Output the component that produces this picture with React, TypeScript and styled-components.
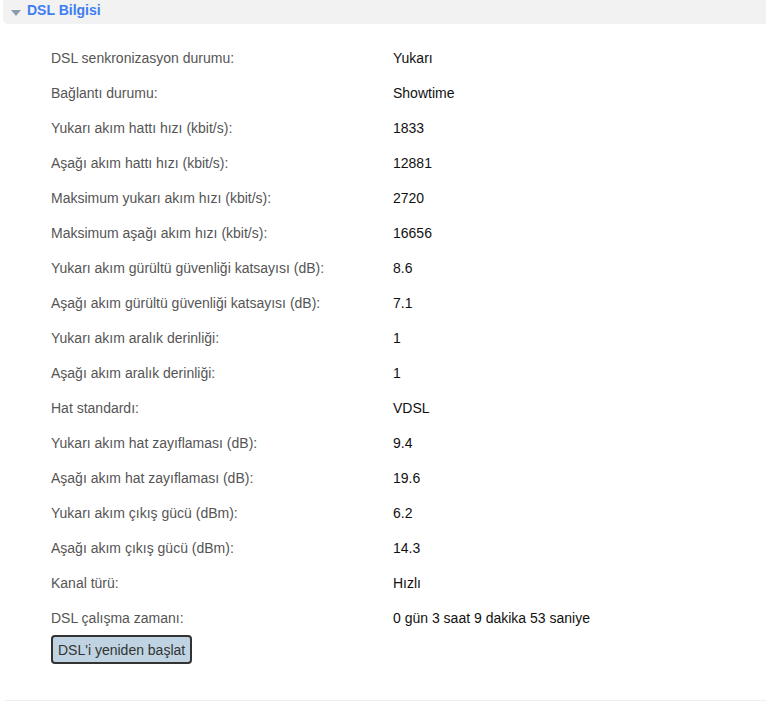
import React from "react";
import styled, { createGlobalStyle } from "styled-components";

const Global = createGlobalStyle`
  html, body { margin: 0; padding: 0; background: #fff; }
  body { font-family: "Liberation Sans", Arial, sans-serif; font-size: 14px; }
`;

const Page = styled.div`
  width: 766px;
  height: 701px;
  padding-left: 3px;
  box-sizing: border-box;
  display: flex;
  flex-direction: column;
`;

const Header = styled.div`
  height: 24px;
  background: #f2f2f2;
  border-bottom-left-radius: 5px;
  display: flex;
  align-items: center;
  padding-left: 8px;
  gap: 6px;
`;

const Caret = styled.span`
  width: 0;
  height: 0;
  border-left: 5px solid transparent;
  border-right: 5px solid transparent;
  border-top: 6px solid #8a9cad;
  margin-top: 2px;
`;

const Title = styled.span`
  color: #3d7ef2;
  font-weight: bold;
  font-size: 14px;
  margin-top: -4px;
`;

const Body = styled.div`
  padding: 16px 0 0 48px;
  flex: 1;
  display: flex;
  flex-direction: column;
`;

const Row = styled.div`
  display: grid;
  grid-template-columns: 342px 1fr;
  height: 35px;
  align-items: center;
`;

const Label = styled.span`
  color: #555;
`;

const Value = styled.span`
  color: #111;
`;

const Button = styled.button`
  align-self: flex-start;
  height: 29px;
  padding: 0 5px;
  margin-top: 0;
  background: #bfd3e2;
  border: 2px solid #333;
  border-radius: 4px;
  color: #333;
  font-family: "Liberation Sans", Arial, sans-serif;
  font-size: 14px;
`;

const Footer = styled.div`
  height: 1px;
  background: #eeeeee;
  margin-left: 2px;
`;

const rows: [string, string][] = [
  ["DSL senkronizasyon durumu:", "Yukarı"],
  ["Bağlantı durumu:", "Showtime"],
  ["Yukarı akım hattı hızı (kbit/s):", "1833"],
  ["Aşağı akım hattı hızı (kbit/s):", "12881"],
  ["Maksimum yukarı akım hızı (kbit/s):", "2720"],
  ["Maksimum aşağı akım hızı (kbit/s):", "16656"],
  ["Yukarı akım gürültü güvenliği katsayısı (dB):", "8.6"],
  ["Aşağı akım gürültü güvenliği katsayısı (dB):", "7.1"],
  ["Yukarı akım aralık derinliği:", "1"],
  ["Aşağı akım aralık derinliği:", "1"],
  ["Hat standardı:", "VDSL"],
  ["Yukarı akım hat zayıflaması (dB):", "9.4"],
  ["Aşağı akım hat zayıflaması (dB):", "19.6"],
  ["Yukarı akım çıkış gücü (dBm):", "6.2"],
  ["Aşağı akım çıkış gücü (dBm):", "14.3"],
  ["Kanal türü:", "Hızlı"],
  ["DSL çalışma zamanı:", "0 gün 3 saat 9 dakika 53 saniye"],
];

export default function App() {
  return (
    <>
      <Global />
      <Page>
        <Header>
          <Caret />
          <Title>DSL Bilgisi</Title>
        </Header>
        <Body>
          {rows.map(([l, v]) => (
            <Row key={l}>
              <Label>{l}</Label>
              <Value>{v}</Value>
            </Row>
          ))}
          <Button>DSL'i yeniden başlat</Button>
        </Body>
        <Footer />
      </Page>
    </>
  );
}
